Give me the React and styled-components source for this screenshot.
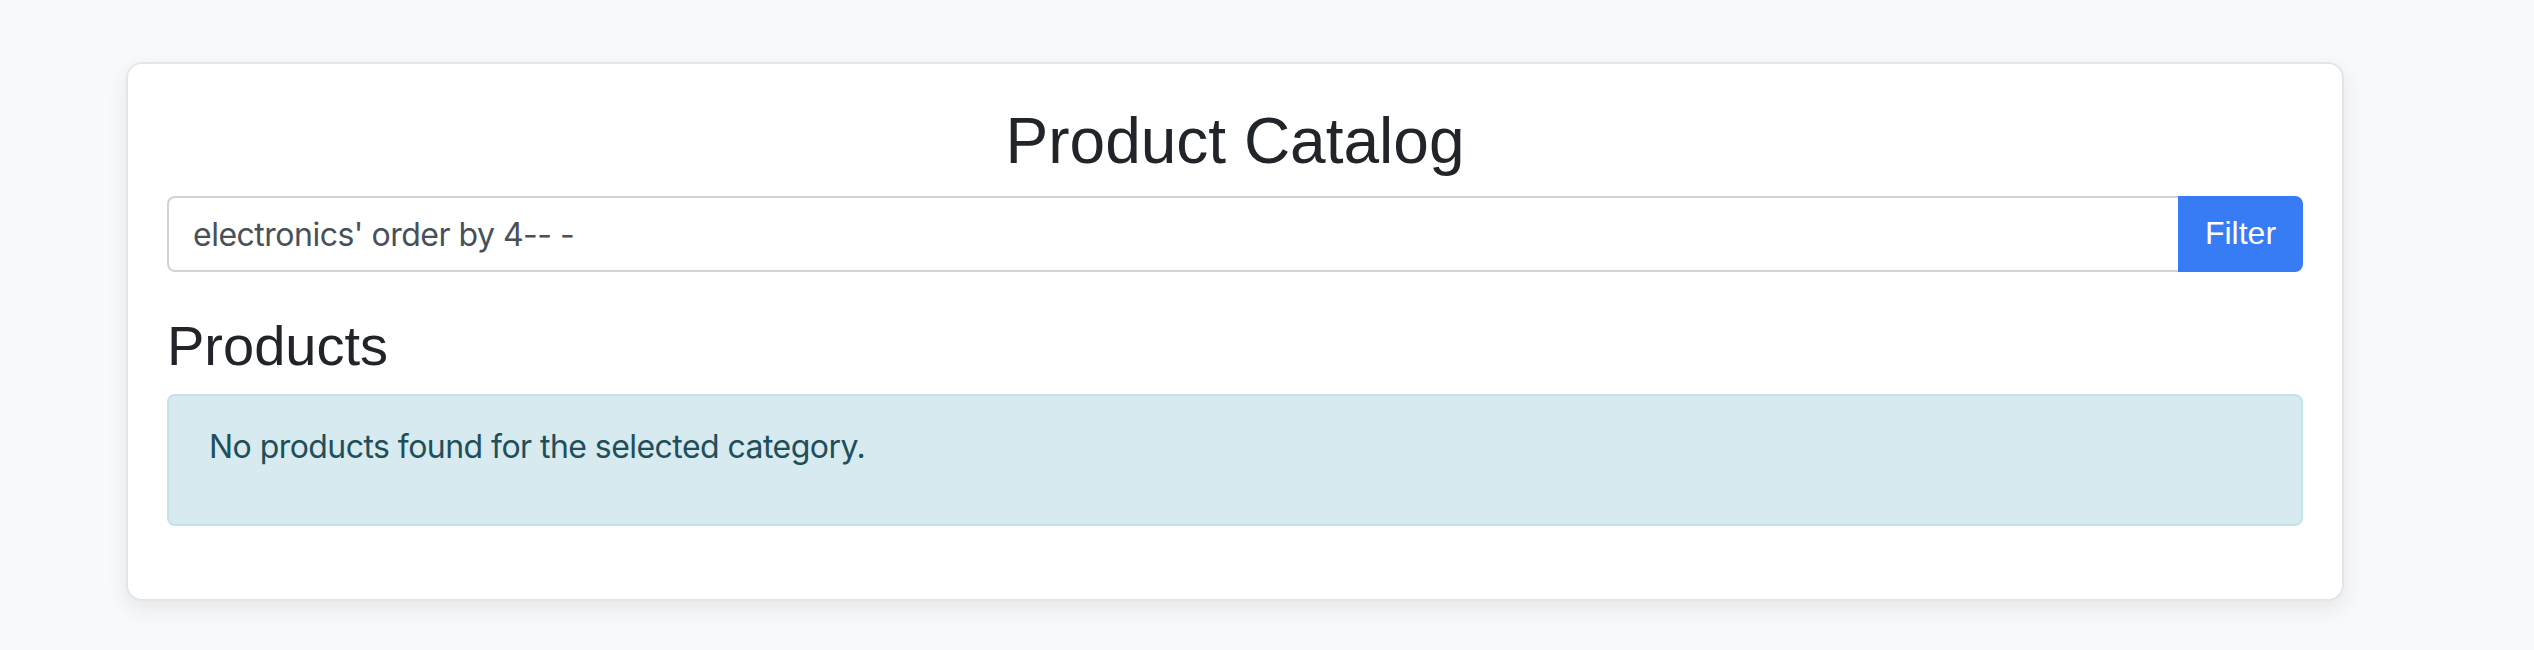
import styled, { createGlobalStyle } from "styled-components";

const GlobalStyle = createGlobalStyle`
  html, body {
    margin: 0;
    padding: 0;
    background: #f8f9fa;
  }
  body {
    font-family: "Liberation Sans", Arial, sans-serif;
    color: #212529;
  }
  * {
    box-sizing: border-box;
  }
`;

export default function App() {
  return (
    <>
      <GlobalStyle />
      <Page>
        <Card>
          <Title>Product Catalog</Title>
          <FilterForm onSubmit={(e) => e.preventDefault()}>
            <SearchInput
              type="text"
              defaultValue="electronics' order by 4-- -"
            />
            <FilterButton type="submit">Filter</FilterButton>
          </FilterForm>
          <SectionTitle>Products</SectionTitle>
          <Alert>
            <AlertText>No products found for the selected category.</AlertText>
          </Alert>
        </Card>
      </Page>
    </>
  );
}

const Page = styled.div`
  padding: 62px 0 50px 126px;
`;

const Card = styled.div`
  width: 2218px;
  background: #fff;
  border: 2px solid #e3e5e8;
  border-radius: 16px;
  box-shadow: 0 8px 22px rgba(0, 0, 0, 0.08);
  padding: 39px 39px 41px;
`;

const Title = styled.h2`
  margin: 0 0 16px;
  font-size: 64px;
  font-weight: 400;
  line-height: 1.2;
  text-align: center;
  color: #212529;
`;

const FilterForm = styled.form`
  display: flex;
  height: 76px;
  margin-bottom: 40px;
`;

const SearchInput = styled.input`
  flex: 1;
  min-width: 0;
  height: 100%;
  padding: 2px 24px 0;
  font-family: Inter, "Liberation Sans", sans-serif;
  font-size: 32px;
  letter-spacing: -0.5px;
  color: #495057;
  background: #fff;
  border: 2px solid #ced4da;
  border-right: none;
  border-radius: 8px 0 0 8px;
  outline: none;
`;

const FilterButton = styled.button`
  width: 125px;
  height: 100%;
  padding: 0;
  font-family: "Liberation Sans", Arial, sans-serif;
  font-size: 32px;
  color: #fff;
  background: #377bf5;
  border: none;
  border-radius: 0 8px 8px 0;
  cursor: pointer;
`;

const SectionTitle = styled.h3`
  margin: 0 0 15px;
  font-size: 56px;
  font-weight: 400;
  line-height: 1.2;
  color: #212529;
`;

const Alert = styled.div`
  background: #d6eaef;
  border: 2px solid #c3e3ea;
  border-radius: 8px;
  padding: 27px 40px 24px;
  margin-bottom: 32px;
`;

const AlertText = styled.p`
  margin: 0 0 29px;
  font-family: Inter, "Liberation Sans", sans-serif;
  font-size: 32px;
  letter-spacing: -0.55px;
  line-height: 48px;
  color: #1f4f5a;
`;
